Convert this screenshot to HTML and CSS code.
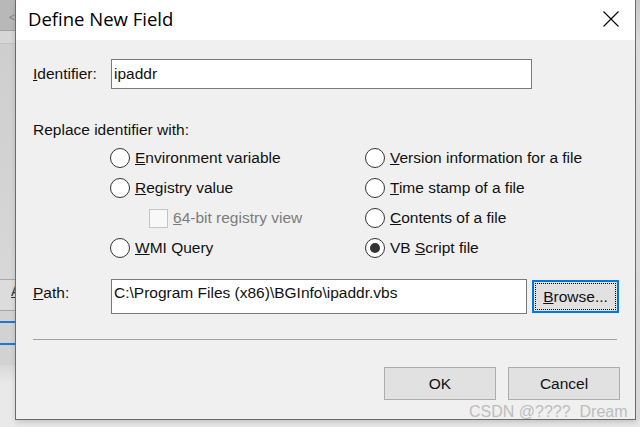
FILE: index.html
```html
<!DOCTYPE html>
<html>
<head>
<meta charset="utf-8">
<link rel="stylesheet" href="styles.css">
</head>
<body>
<div class="desktop">
  <div class="behind">
    <div class="b-top"><span class="chev">&lt;</span></div>
    <div class="b-tab"></div>
    <div class="b-mid"></div>
    <div class="b-row"><u>A</u></div>
    <div class="b-sel"><div class="b-blue"></div><div class="b-blue"></div></div>
    <div class="b-low"></div>
  </div>
  <div class="dialog">
    <div class="titlebar">
      <span class="title">Define New Field</span>
      <svg class="close" width="16" height="16" viewBox="0 0 16 16"><path d="M0.5 0.5 L15.5 15.5 M15.5 0.5 L0.5 15.5" stroke="#000" stroke-width="1.1" fill="none"/></svg>
    </div>
    <div class="content">
      <div class="field-row ident-row">
        <span class="lbl"><u>I</u>dentifier:</span>
        <div class="input ident-input">ipaddr</div>
      </div>
      <div class="group-title">Replace identifier with:</div>
      <div class="options">
        <div class="col col1">
          <div class="opt"><span class="radio"></span><span><u>E</u>nvironment variable</span></div>
          <div class="opt"><span class="radio"></span><span><u>R</u>egistry value</span></div>
          <div class="opt sub"><span class="check"></span><span class="disabled"><u>6</u>4-bit registry view</span></div>
          <div class="opt"><span class="radio"></span><span><u>W</u>MI Query</span></div>
        </div>
        <div class="col col2">
          <div class="opt"><span class="radio"></span><span><u>V</u>ersion information for a file</span></div>
          <div class="opt"><span class="radio"></span><span><u>T</u>ime stamp of a file</span></div>
          <div class="opt"><span class="radio"></span><span><u>C</u>ontents of a file</span></div>
          <div class="opt"><span class="radio on"></span><span>VB <u>S</u>cript file</span></div>
        </div>
      </div>
      <div class="field-row path-row">
        <span class="lbl"><u>P</u>ath:</span>
        <div class="input path-input">C:\Program Files (x86)\BGInfo\ipaddr.vbs</div>
        <div class="btn browse"><span class="focus"><u>B</u>rowse...</span></div>
      </div>
      <div class="sep"></div>
      <div class="buttons">
        <div class="btn">OK</div>
        <div class="btn">Cancel</div>
      </div>
    </div>
  </div>
  <div class="right-strip"></div>
</div>
<div class="watermark">CSDN @????&nbsp; Dream</div>
</body>
</html>
```
FILE: styles.css
```css
* { box-sizing: border-box; }
html, body { margin: 0; padding: 0; }
body {
  width: 640px;
  height: 427px;
  overflow: hidden;
  background: #e9e9e9;
  font-family: "Liberation Sans", Arial, sans-serif;
  font-size: 15.5px;
  color: #111;
  position: relative;
}
.desktop {
  display: flex;
  align-items: flex-start;
  width: 640px;
  height: 427px;
}
.behind {
  width: 15px;
  height: 427px;
  overflow: hidden;
  display: flex;
  flex-direction: column;
  flex: none;
}
.b-top {
  height: 31px;
  background: #b8b8b8;
  border-bottom: 1px solid #a2a2a2;
  padding: 7px 0 0 9px;
}
.chev { font-size: 10px; color: #7d7d7d; }
.b-tab {
  height: 13px;
  background: #d6d6d6;
  border-bottom: 1px solid #c2c2c2;
}
.b-mid {
  height: 236px;
  background: linear-gradient(#cecece, #d7d7d7);
  border-bottom: 1px solid #a9a9a9;
}
.b-row {
  height: 31px;
  background: #dcdcdc;
  border-bottom: 1px solid #a5a5a5;
  padding: 3px 0 0 11px;
  color: #333;
  font-size: 14px;
}
.b-sel {
  height: 54px;
  background: #d2d2d2;
  padding-top: 10px;
  display: flex;
  flex-direction: column;
  gap: 20px;
}
.b-blue { height: 2px; background: #1f77d1; }
.b-low {
  flex: 1;
  background: linear-gradient(#d8d8d8, #e9e9e9 30%);
}
.dialog {
  width: 621px;
  height: 420px;
  flex: none;
  background: #f0f0f0;
  border: 1px solid #6b6b6b;
  border-top: none;
  box-shadow: 1px 2px 6px rgba(0,0,0,0.18);
  display: flex;
  flex-direction: column;
}
.titlebar {
  height: 40px;
  background: #fff;
  display: flex;
  align-items: center;
  justify-content: space-between;
  padding: 0 16px 0 12px;
}
.title {
  font-family: "Open Sans", "Liberation Sans", sans-serif;
  font-size: 18.5px;
  margin-bottom: 3px;
  color: #000;
}
.close { margin-bottom: 3px; }
.content {
  padding: 19px 0 0 17px;
  display: flex;
  flex-direction: column;
}
.field-row {
  display: flex;
  align-items: flex-start;
}
.lbl {
  width: 78px;
  flex: none;
  line-height: 17px;
}
.ident-row .lbl { padding-top: 6px; }
.path-row .lbl { padding-top: 5px; }
.input {
  background: #fff;
  border: 1px solid #7a7a7a;
  padding: 5px 0 0 2px;
  line-height: 17px;
}
.ident-input { width: 421px; height: 30px; }
.path-input { width: 416px; height: 35px; padding-top: 4px; }
.group-title {
  margin-top: 32px;
  line-height: 17px;
}
.options {
  margin: 5px 0 0 77px;
  display: flex;
}
.col { display: flex; flex-direction: column; }
.col1 { width: 255px; }
.opt {
  height: 30px;
  display: flex;
  align-items: center;
  gap: 5px;
  white-space: nowrap;
}
.opt.sub { padding-left: 39px; gap: 5px; }
.radio {
  width: 20px;
  height: 20px;
  border-radius: 50%;
  border: 1px solid #333;
  background: #fff;
  flex: none;
  display: flex;
  align-items: center;
  justify-content: center;
}
.radio.on::after {
  content: "";
  width: 10px;
  height: 10px;
  border-radius: 50%;
  background: #333;
}
.check {
  width: 19px;
  height: 19px;
  border: 1px solid #c4c4c4;
  background: #f8f8f8;
  flex: none;
}
.disabled { color: #7c7c7c; }
.path-row { margin-top: 16px; align-items: center; }
.path-row .lbl { align-self: flex-start; }
.btn {
  background: #e1e1e1;
  border: 1px solid #adadad;
  display: flex;
  align-items: center;
  justify-content: center;
  line-height: 17px;
}
.browse {
  margin-left: 5px;
  width: 87px;
  height: 33px;
  border: 2px solid #0078d7;
  padding: 1px;
  align-items: stretch;
  justify-content: stretch;
}
.focus {
  flex: 1;
  border: 1px dotted #000;
  display: flex;
  align-items: center;
  justify-content: center;
}
.sep {
  margin-top: 25px;
  width: 584px;
  height: 1px;
  background: #a0a0a0;
}
.buttons {
  margin: 27px 0 0 351px;
  display: flex;
  gap: 12px;
}
.buttons .btn { width: 112px; height: 33px; }
.right-strip {
  width: 4px;
  height: 420px;
  background: linear-gradient(#c9c9c9, #dcdcdc 10%, #d9d9d9);
  flex: none;
}
.watermark {
  position: absolute;
  left: 469px;
  top: 403px;
  font-size: 16px;
  line-height: 18px;
  color: #bdbdbd;
  white-space: nowrap;
}
```
